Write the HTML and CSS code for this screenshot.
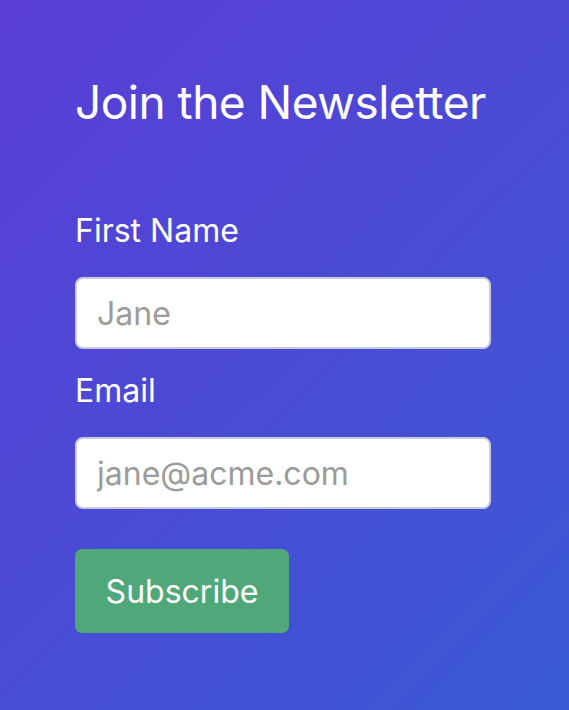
FILE: index.html
```html
<!DOCTYPE html>
<html lang="en">
<head>
<meta charset="utf-8">
<title>Join the Newsletter</title>
<link rel="stylesheet" href="styles.css">
</head>
<body>
<main class="page">
  <form class="newsletter">
    <h1 class="title">Join the Newsletter</h1>
    <label class="label" for="first">First Name</label>
    <input class="field" id="first" type="text" placeholder="Jane">
    <label class="label" for="email">Email</label>
    <input class="field" id="email" type="email" placeholder="jane@acme.com">
    <button class="btn" type="button">Subscribe</button>
  </form>
</main>
</body>
</html>
```
FILE: styles.css
```css
* { box-sizing: border-box; }
html, body { margin: 0; height: 100%; }
body {
  font-family: Inter, "Noto Sans", sans-serif;
  background: linear-gradient(135deg, #5a3dd5 0%, #3a5ad5 100%);
  color: #fff;
}
.page {
  min-height: 100%;
  padding: 75px 78px 40px 75px;
}
.newsletter {
  display: flex;
  flex-direction: column;
  align-items: flex-start;
}
.title {
  margin: 0 0 78px;
  font-size: 46px;
  font-weight: 400;
  line-height: 1.2;
  letter-spacing: -0.5px;
}
.label {
  font-size: 32px;
  line-height: 45px;
  margin-bottom: 24px;
}
.field {
  width: 100%;
  height: 72px;
  border: 2px solid #cbcbe0;
  border-radius: 8px;
  background: #fff;
  padding: 0 20px;
  font-family: inherit;
  font-size: 32px;
  color: #333;
  margin-bottom: 19px;
  outline: none;
}
.field::placeholder { color: #9b9b9b; }
.btn {
  margin-top: 21px;
  width: 214px;
  height: 84px;
  border: 0;
  border-radius: 7px;
  background: #4fa77a;
  color: #fff;
  font-family: inherit;
  font-size: 32px;
  cursor: pointer;
}
```
